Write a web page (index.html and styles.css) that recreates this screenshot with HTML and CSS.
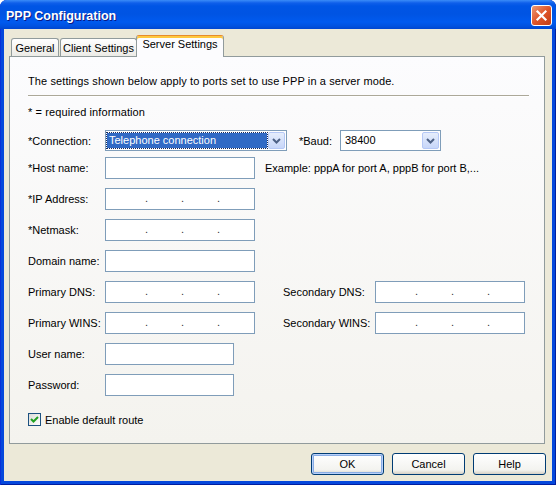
FILE: index.html
```html
<!DOCTYPE html>
<html lang="en">

<head>
    <meta charset="UTF-8">
    <title>PPP Configuration</title>
    <link rel="stylesheet" href="styles.css">
</head>

<body>
    <div class="window">
        <div class="titlebar">
            <span class="title">PPP Configuration</span>
            <div class="close">
                <svg width="19" height="19" viewBox="0 0 19 19">
                    <path d="M5.5 5.5 L13.5 13.5 M13.5 5.5 L5.5 13.5" stroke="#fff" stroke-width="2.2" stroke-linecap="square" />
                </svg>
            </div>
        </div>

        <div class="client">
            <div class="tabs">
                <div class="tab general">General</div>
                <div class="tab clientTab">Client Settings</div>
                <div class="tab active">Server Settings</div>
            </div>

            <div class="panel">
                <p class="intro">The settings shown below apply to ports set to use PPP in a server mode.</p>
                <div class="rule"></div>
                <p class="required">* = required information</p>

                <div class="form">
                    <div class="row comboRow">
                        <span class="label">*Connection:</span>
                        <div class="combo connection">
                            <span class="value selected">Telephone connection</span>
                            <span class="arrow">
                                <svg width="9" height="6" viewBox="0 0 9 6"><path d="M1 1 L4.5 4.5 L8 1" fill="none" stroke="#4d6185" stroke-width="2" /></svg>
                            </span>
                        </div>
                        <span class="baudLabel">*Baud:</span>
                        <div class="combo baud">
                            <span class="value">38400</span>
                            <span class="arrow">
                                <svg width="9" height="6" viewBox="0 0 9 6"><path d="M1 1 L4.5 4.5 L8 1" fill="none" stroke="#4d6185" stroke-width="2" /></svg>
                            </span>
                        </div>
                    </div>

                    <div class="row">
                        <span class="label">*Host name:</span>
                        <div class="field"></div>
                        <span class="hint">Example: pppA for port A, pppB for port B,...</span>
                    </div>

                    <div class="row">
                        <span class="label">*IP Address:</span>
                        <div class="field ip"><span>.</span><span>.</span><span>.</span></div>
                    </div>

                    <div class="row">
                        <span class="label">*Netmask:</span>
                        <div class="field ip"><span>.</span><span>.</span><span>.</span></div>
                    </div>

                    <div class="row">
                        <span class="label">Domain name:</span>
                        <div class="field"></div>
                    </div>

                    <div class="row">
                        <span class="label">Primary DNS:</span>
                        <div class="field ip"><span>.</span><span>.</span><span>.</span></div>
                        <span class="label second">Secondary DNS:</span>
                        <div class="field ip"><span>.</span><span>.</span><span>.</span></div>
                    </div>

                    <div class="row">
                        <span class="label">Primary WINS:</span>
                        <div class="field ip"><span>.</span><span>.</span><span>.</span></div>
                        <span class="label second">Secondary WINS:</span>
                        <div class="field ip"><span>.</span><span>.</span><span>.</span></div>
                    </div>

                    <div class="row">
                        <span class="label">User name:</span>
                        <div class="field short"></div>
                    </div>

                    <div class="row">
                        <span class="label">Password:</span>
                        <div class="field short"></div>
                    </div>
                </div>

                <div class="check">
                    <span class="box">
                        <svg width="11" height="11" viewBox="0 0 11 11"><path d="M2 5 L4.5 7.5 L9 3" fill="none" stroke="#21a121" stroke-width="2" /></svg>
                    </span>
                    <span>Enable default route</span>
                </div>
            </div>

            <div class="buttons">
                <div class="btn default">OK</div>
                <div class="btn">Cancel</div>
                <div class="btn">Help</div>
            </div>
        </div>
    </div>
</body>

</html>
```

FILE: styles.css
```css
* {
    box-sizing: border-box;
}

html,
body {
    margin: 0;
    height: 100%;
}

body {
    overflow: hidden;
    background-color: #ffffff;
    font-family: "Liberation Sans", Arial, sans-serif;
    font-size: 11px;
    color: #000;
}

.window {
    width: 556px;
    height: 485px;
    display: flex;
    flex-direction: column;
    background-color: #0548dc;
    border-radius: 7px 7px 0 0;
    box-shadow: inset 1px 0 #0831d9, inset -1px 0 #001ea0, inset 0 -1px #001ea0;
}

/* title bar */
.titlebar {
    height: 29px;
    display: flex;
    justify-content: space-between;
    padding: 0 4px 0 6px;
    border-radius: 7px 7px 0 0;
    background: linear-gradient(#3b8cf8 0, #0f5fea 3px, #0055e5 6px, #0054e3 14px, #005aef 22px, #0052e0 26px, #0046d0 29px);
}

.title {
    margin-top: 9px;
    color: #fff;
    font-weight: bold;
    font-size: 12.5px;
    text-shadow: 1px 1px #0a1883;
}

.close {
    width: 21px;
    height: 21px;
    margin-top: 5px;
    border: 1px solid #fff;
    border-radius: 3px;
    background: linear-gradient(135deg, #ec9a76, #e0562a 50%, #c23c14);
}

.close svg {
    display: block;
}

/* client area */
.client {
    flex: 1;
    margin: 0 4px 4px;
    padding: 6px 7px 0 5px;
    background-color: #ece9d8;
    display: flex;
    flex-direction: column;
}

.tabs {
    display: flex;
    align-items: flex-end;
    height: 22px;
    padding-left: 2px;
    margin-bottom: -1px;
    position: relative;
    z-index: 1;
}

.tab {
    height: 18px;
    margin-bottom: 1px;
    border: 1px solid #919b9c;
    border-bottom: none;
    border-radius: 3px 3px 0 0;
    background: linear-gradient(#ffffff, #ecebe6);
    text-align: center;
    line-height: 19px;
}

.general {
    width: 48px;
    margin-right: 1px;
}

.clientTab {
    width: 77px;
}

.tab.active {
    width: 88px;
    height: 22px;
    margin: 0 0 0 -1px;
    line-height: 17px;
    background-color: #fcfcfe;
    background-image: none;
    border-top: 1px solid #e68b2c;
    box-shadow: inset 0 2px #ffc83c;
}

.panel {
    height: 388px;
    border: 1px solid #919b9c;
    padding: 18px 15px 0 18px;
    background: linear-gradient(#fcfcfe, #f4f3ee);
}

.intro,
.required {
    margin: 0;
    line-height: 13px;
    letter-spacing: 0.1px;
}

.rule {
    margin-top: 7px;
    border-top: 1px solid #aca899;
    border-bottom: 1px solid #ffffff;
}

.required {
    margin-top: 9px;
}

.form {
    margin-top: 11px;
}

.row {
    display: flex;
    align-items: center;
    height: 22px;
    margin-bottom: 9px;
}

.row.comboRow {
    height: 21px;
    margin-bottom: 6px;
}

.label {
    width: 77px;
    flex: none;
}

.label.second {
    width: 92px;
    margin-left: 28px;
}

.field {
    width: 150px;
    height: 22px;
    border: 1px solid #7f9db9;
    background-color: #fff;
}

.field.short {
    width: 129px;
}

.field.ip {
    display: flex;
    padding-left: 39px;
    line-height: 19px;
    color: #333;
}

.field.ip span {
    width: 36px;
}

.hint {
    margin-left: 10px;
}

/* combo boxes */
.combo {
    display: flex;
    height: 21px;
    border: 1px solid #7f9db9;
    background-color: #fff;
    padding: 1px;
}

.combo.connection {
    width: 182px;
}

.combo.baud {
    width: 101px;
}

.baudLabel {
    width: 41px;
    margin-left: 12px;
}

.combo .value {
    flex: 1;
    padding-left: 3px;
    line-height: 17px;
}

.combo .value.selected {
    margin: 1px 1px 1px 0;
    padding-left: 2px;
    line-height: 15px;
    background-color: #316ac5;
    color: #fff;
    outline: 1px dotted #1b2a58;
}

.arrow {
    width: 17px;
    display: flex;
    align-items: center;
    justify-content: center;
    border: 1px solid #b5c8f6;
    border-radius: 2px;
    background: linear-gradient(#e6eefc, #c7d6f9);
}

.arrow svg {
    display: block;
}

/* checkbox */
.check {
    display: flex;
    align-items: center;
    margin-top: 17px;
    gap: 4px;
}

.box {
    width: 13px;
    height: 13px;
    border: 1px solid #1c5180;
    background: linear-gradient(135deg, #dcdcd7, #ffffff);
}

.box svg {
    display: block;
}

/* buttons */
.buttons {
    display: flex;
    justify-content: flex-end;
    gap: 8px;
    margin: 9px -1px 0 0;
}

.btn {
    width: 73px;
    height: 22px;
    border: 1px solid #003c74;
    border-radius: 3px;
    background: linear-gradient(#ffffff, #f3f3ef 80%, #d6d0c5);
    text-align: center;
    line-height: 20px;
}

.btn.default {
    box-shadow: inset 0 0 0 1px #b9d1fa, inset 0 0 0 2px #89ade4;
}
```
